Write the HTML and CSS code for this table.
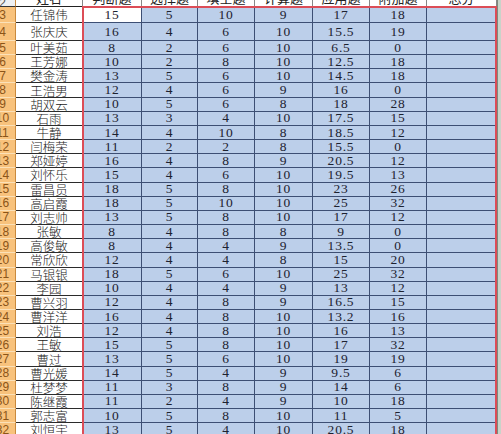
FILE: index.html
```html
<!DOCTYPE html>
<html lang="zh">
<head>
<meta charset="utf-8">
<link rel="stylesheet" href="styles.css">
</head>
<body>
<div class="viewport">
<div class="stack">
<div class="sheet">
  <div class="rh rh-top">2</div><div class="hd nm-hd"><span>姓名</span></div><div class="hd"><span>判断题</span></div><div class="hd"><span>选择题</span></div><div class="hd"><span>填空题</span></div><div class="hd"><span>计算题</span></div><div class="hd"><span>应用题</span></div><div class="hd"><span>附加题</span></div><div class="hd"><span>总分</span></div><div class="ed"></div>

  <div class="rh">3</div><div class="nm">任锦伟</div><div class="v act">15</div><div class="v">5</div><div class="v">10</div><div class="v">9</div><div class="v">17</div><div class="v">18</div><div class="v"></div><div class="ed"></div>
  <div class="rh">4</div><div class="nm">张庆庆</div><div class="v">16</div><div class="v">4</div><div class="v">6</div><div class="v">10</div><div class="v">15.5</div><div class="v">19</div><div class="v"></div><div class="ed"></div>
  <div class="rh">5</div><div class="nm">叶美茹</div><div class="v">8</div><div class="v">2</div><div class="v">6</div><div class="v">10</div><div class="v">6.5</div><div class="v">0</div><div class="v"></div><div class="ed"></div>
  <div class="rh">6</div><div class="nm">王芳娜</div><div class="v">10</div><div class="v">2</div><div class="v">8</div><div class="v">10</div><div class="v">12.5</div><div class="v">18</div><div class="v"></div><div class="ed"></div>
  <div class="rh">7</div><div class="nm">樊金涛</div><div class="v">13</div><div class="v">5</div><div class="v">6</div><div class="v">10</div><div class="v">14.5</div><div class="v">18</div><div class="v"></div><div class="ed"></div>
  <div class="rh">8</div><div class="nm">王浩男</div><div class="v">12</div><div class="v">4</div><div class="v">6</div><div class="v">9</div><div class="v">16</div><div class="v">0</div><div class="v"></div><div class="ed"></div>
  <div class="rh">9</div><div class="nm">胡双云</div><div class="v">10</div><div class="v">5</div><div class="v">6</div><div class="v">8</div><div class="v">18</div><div class="v">28</div><div class="v"></div><div class="ed"></div>
  <div class="rh">10</div><div class="nm">石雨</div><div class="v">13</div><div class="v">3</div><div class="v">4</div><div class="v">10</div><div class="v">17.5</div><div class="v">15</div><div class="v"></div><div class="ed"></div>
  <div class="rh">11</div><div class="nm">牛静</div><div class="v">14</div><div class="v">4</div><div class="v">10</div><div class="v">8</div><div class="v">18.5</div><div class="v">12</div><div class="v"></div><div class="ed"></div>
  <div class="rh">12</div><div class="nm">闫梅荣</div><div class="v">11</div><div class="v">2</div><div class="v">2</div><div class="v">8</div><div class="v">15.5</div><div class="v">0</div><div class="v"></div><div class="ed"></div>
  <div class="rh">13</div><div class="nm">郑娅婷</div><div class="v">16</div><div class="v">4</div><div class="v">8</div><div class="v">9</div><div class="v">20.5</div><div class="v">12</div><div class="v"></div><div class="ed"></div>
  <div class="rh">14</div><div class="nm">刘怀乐</div><div class="v">15</div><div class="v">4</div><div class="v">6</div><div class="v">10</div><div class="v">19.5</div><div class="v">13</div><div class="v"></div><div class="ed"></div>
  <div class="rh">15</div><div class="nm">雷昌员</div><div class="v">18</div><div class="v">5</div><div class="v">8</div><div class="v">10</div><div class="v">23</div><div class="v">26</div><div class="v"></div><div class="ed"></div>
  <div class="rh">16</div><div class="nm">高启霞</div><div class="v">18</div><div class="v">5</div><div class="v">10</div><div class="v">10</div><div class="v">25</div><div class="v">32</div><div class="v"></div><div class="ed"></div>
  <div class="rh">17</div><div class="nm">刘志帅</div><div class="v">13</div><div class="v">5</div><div class="v">8</div><div class="v">10</div><div class="v">17</div><div class="v">12</div><div class="v"></div><div class="ed"></div>
  <div class="rh">18</div><div class="nm">张敏</div><div class="v">8</div><div class="v">4</div><div class="v">8</div><div class="v">8</div><div class="v">9</div><div class="v">0</div><div class="v"></div><div class="ed"></div>
  <div class="rh">19</div><div class="nm">高俊敏</div><div class="v">8</div><div class="v">4</div><div class="v">4</div><div class="v">9</div><div class="v">13.5</div><div class="v">0</div><div class="v"></div><div class="ed"></div>
  <div class="rh">20</div><div class="nm">常欣欣</div><div class="v">12</div><div class="v">4</div><div class="v">4</div><div class="v">8</div><div class="v">15</div><div class="v">20</div><div class="v"></div><div class="ed"></div>
  <div class="rh">21</div><div class="nm">马银银</div><div class="v">18</div><div class="v">5</div><div class="v">6</div><div class="v">10</div><div class="v">25</div><div class="v">32</div><div class="v"></div><div class="ed"></div>
  <div class="rh">22</div><div class="nm">李园</div><div class="v">10</div><div class="v">4</div><div class="v">4</div><div class="v">9</div><div class="v">13</div><div class="v">12</div><div class="v"></div><div class="ed"></div>
  <div class="rh">23</div><div class="nm">曹兴羽</div><div class="v">12</div><div class="v">4</div><div class="v">8</div><div class="v">9</div><div class="v">16.5</div><div class="v">15</div><div class="v"></div><div class="ed"></div>
  <div class="rh">24</div><div class="nm">曹洋洋</div><div class="v">16</div><div class="v">4</div><div class="v">8</div><div class="v">10</div><div class="v">13.2</div><div class="v">16</div><div class="v"></div><div class="ed"></div>
  <div class="rh">25</div><div class="nm">刘浩</div><div class="v">12</div><div class="v">4</div><div class="v">8</div><div class="v">10</div><div class="v">16</div><div class="v">13</div><div class="v"></div><div class="ed"></div>
  <div class="rh">26</div><div class="nm">王敏</div><div class="v">15</div><div class="v">5</div><div class="v">8</div><div class="v">10</div><div class="v">17</div><div class="v">32</div><div class="v"></div><div class="ed"></div>
  <div class="rh">27</div><div class="nm">曹过</div><div class="v">13</div><div class="v">5</div><div class="v">6</div><div class="v">10</div><div class="v">19</div><div class="v">19</div><div class="v"></div><div class="ed"></div>
  <div class="rh">28</div><div class="nm">曹光媛</div><div class="v">14</div><div class="v">5</div><div class="v">4</div><div class="v">9</div><div class="v">9.5</div><div class="v">6</div><div class="v"></div><div class="ed"></div>
  <div class="rh">29</div><div class="nm">杜梦梦</div><div class="v">11</div><div class="v">3</div><div class="v">8</div><div class="v">9</div><div class="v">14</div><div class="v">6</div><div class="v"></div><div class="ed"></div>
  <div class="rh">30</div><div class="nm">陈继霞</div><div class="v">11</div><div class="v">2</div><div class="v">4</div><div class="v">9</div><div class="v">10</div><div class="v">18</div><div class="v"></div><div class="ed"></div>
  <div class="rh">31</div><div class="nm">郭志富</div><div class="v">10</div><div class="v">5</div><div class="v">8</div><div class="v">10</div><div class="v">11</div><div class="v">5</div><div class="v"></div><div class="ed"></div>
  <div class="rh">32</div><div class="nm">刘恒宇</div><div class="v">13</div><div class="v">5</div><div class="v">4</div><div class="v">10</div><div class="v">20.5</div><div class="v">18</div><div class="v"></div><div class="ed"></div>
</div>
<div class="overlay">
  <div class="selection"></div>
</div>
</div>
</div>
</body>
</html>
```

FILE: styles.css
```css
html, body {
  margin: 0;
  padding: 0;
  background: #ffffff;
}

.viewport {
  width: 501px;
  height: 434px;
  overflow: hidden;
}

.stack {
  display: grid;
  margin-left: -10px;
  width: 511px;
}

.sheet,
.overlay {
  grid-area: 1 / 1;
  display: grid;
  grid-template-columns: 26px 67px 59px 56px 57px 58px 57px 57px 70px 4px;
  grid-template-rows: 7px 16px 18px repeat(28, 14.16px);
}

.overlay {
  z-index: 2;
  pointer-events: none;
}

.sheet > div {
  box-sizing: border-box;
  display: flex;
  align-items: center;
  justify-content: center;
  overflow: hidden;
  white-space: nowrap;
}

.rh {
  background: #f8c27c;
  color: #8a5418;
  font-family: "Liberation Sans", Arial, sans-serif;
  font-size: 12px;
  border-bottom: 1px solid #fbe1b8;
  border-right: 1px solid #c98a3e;
}

.rh-top {
  background: #eef0f3;
  color: #555;
  border-bottom: 1px solid #333 !important;
}

.hd {
  background: #ffffff;
  border-right: 1px solid #888;
  border-bottom: 1px solid #222;
  font-family: "Noto Sans CJK SC", sans-serif;
  font-size: 13px;
  color: #222;
  align-items: flex-end !important;
}

.hd span {
  display: block;
  line-height: 13px;
  margin-bottom: 2px;
}

.nm {
  background: #ffffff;
  color: #1a1a1a;
  font-family: "Noto Sans CJK SC", sans-serif;
  font-weight: 300;
  font-size: 12.5px;
  border-bottom: 1px solid #2b2b2b;
  border-right: 1px solid #2b2b2b;
}

.v {
  background: #bccfea;
  color: #1d2230;
  font-family: "Liberation Serif", "Times New Roman", serif;
  font-size: 13.5px;
  letter-spacing: 0.8px;
  border-bottom: 1px solid #3d4f74;
  border-right: 1px solid #3d4f74;
}

.v.act {
  background: #ffffff;
}

.ed {
  background: #c9d3c9;
  border-left: 1px solid #7d8a7d;
}

.selection {
  grid-column: 3 / 10;
  grid-row: 2 / -1;
  box-sizing: border-box;
  border: 2px solid #dc4d57;
  margin: -1px 0 0 -1px;
}
```
